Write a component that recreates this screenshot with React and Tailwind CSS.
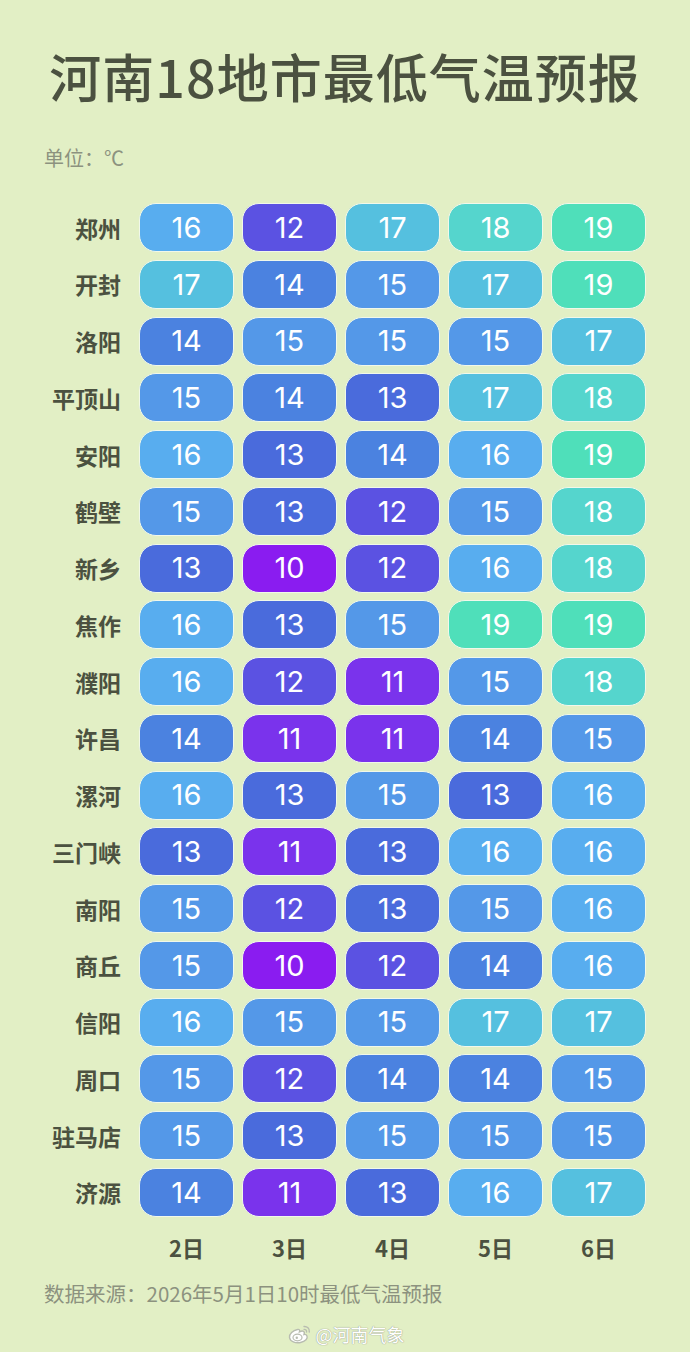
import React from "react";

const data = [
  ["郑州", [16, 12, 17, 18, 19]],
  ["开封", [17, 14, 15, 17, 19]],
  ["洛阳", [14, 15, 15, 15, 17]],
  ["平顶山", [15, 14, 13, 17, 18]],
  ["安阳", [16, 13, 14, 16, 19]],
  ["鹤壁", [15, 13, 12, 15, 18]],
  ["新乡", [13, 10, 12, 16, 18]],
  ["焦作", [16, 13, 15, 19, 19]],
  ["濮阳", [16, 12, 11, 15, 18]],
  ["许昌", [14, 11, 11, 14, 15]],
  ["漯河", [16, 13, 15, 13, 16]],
  ["三门峡", [13, 11, 13, 16, 16]],
  ["南阳", [15, 12, 13, 15, 16]],
  ["商丘", [15, 10, 12, 14, 16]],
  ["信阳", [16, 15, 15, 17, 17]],
  ["周口", [15, 12, 14, 14, 15]],
  ["驻马店", [15, 13, 15, 15, 15]],
  ["济源", [14, 11, 13, 16, 17]],
];

const colors = {
  10: "bg-[#8a1cf0]",
  11: "bg-[#7a33ec]",
  12: "bg-[#5b52e2]",
  13: "bg-[#4a6bdc]",
  14: "bg-[#4b82e0]",
  15: "bg-[#5498e8]",
  16: "bg-[#58adef]",
  17: "bg-[#55c0df]",
  18: "bg-[#55d5cd]",
  19: "bg-[#4fdfba]",
};

const cjk = { fontFamily: '"Noto Sans CJK SC", "Noto Sans", sans-serif' };
const num = { fontFamily: 'Inter, "Noto Sans", sans-serif' };

function Weibo() {
  return (
    <svg width="26" height="22" viewBox="0 0 26 22" fill="none">
      <path
        d="M10.5 6.5C6 7.5 2 11 2.5 14.5C3 18.5 8.5 20.5 13.5 19.5C18.5 18.5 21 15.5 20 13C19.4 11.6 17.8 11.3 17 11.5C17.6 10 17.5 8.8 16.5 8.3C15 7.6 12.5 8.8 12.5 8.8C13 7.2 12.3 6 10.5 6.5Z"
        stroke="#b8bcb0"
        strokeWidth="1.4"
        fill="#ffffff"
      />
      <ellipse cx="10.5" cy="14.5" rx="4.5" ry="3.3" stroke="#b8bcb0" strokeWidth="1.2" fill="#fff" />
      <circle cx="9.8" cy="14.8" r="1.2" fill="#b8bcb0" />
      <path d="M17 3.5C20 3.2 22.8 5.5 22.3 9" stroke="#b8bcb0" strokeWidth="1.4" strokeLinecap="round" />
      <path d="M17 6.3C18.6 6.2 19.9 7.4 19.6 9" stroke="#b8bcb0" strokeWidth="1.3" strokeLinecap="round" />
    </svg>
  );
}

export default function App() {
  return (
    <div className="w-[690px] h-[1352px] bg-[#e2efc5] overflow-hidden" style={cjk}>
      <h1 className="pt-[45px] text-center text-[52px] leading-[62px] text-[#4b5140] font-medium tracking-[1px]">
        河南18地市最低气温预报
      </h1>
      <div className="mt-[38px] pl-[44px] text-[20px] leading-[26px] text-[#8c927f]">单位：℃</div>

      <div className="mt-[32px] pl-[44px] flex flex-col gap-[7.76px]">
        {data.map(([city, vals]) => (
          <div key={city} className="flex items-center">
            <div className="w-[77px] text-right text-[23px] font-bold text-[#4b5140] leading-[30px]">{city}</div>
            <div className="ml-[18px] flex gap-[8px]">
              {vals.map((v, i) => (
                <div
                  key={i}
                  className={`w-[95px] h-[49px] rounded-[17px] border-[1.5px] border-[#f1f8ea] ${colors[v]} flex items-center justify-center text-white text-[29px] font-normal`}
                  style={num}
                >
                  {v}
                </div>
              ))}
            </div>
          </div>
        ))}
      </div>

      <div className="mt-[15px] pl-[139px] flex gap-[8px]">
        {["2日", "3日", "4日", "5日", "6日"].map((d) => (
          <div key={d} className="w-[95px] text-center text-[22px] font-bold text-[#4b5140] leading-[30px]">
            {d}
          </div>
        ))}
      </div>

      <div className="mt-[18px] pl-[44px] text-[20.5px] leading-[26px] text-[#8c927f]">
        数据来源：2026年5月1日10时最低气温预报
      </div>

      <div className="mt-[16px] flex items-center justify-center gap-[2px] pl-[2px]">
        <Weibo />
        <span className="text-[18px] leading-[24px] text-white [text-shadow:0_0_1px_#9aa090,0_0_1px_#9aa090]">
          @河南气象
        </span>
      </div>
    </div>
  );
}
